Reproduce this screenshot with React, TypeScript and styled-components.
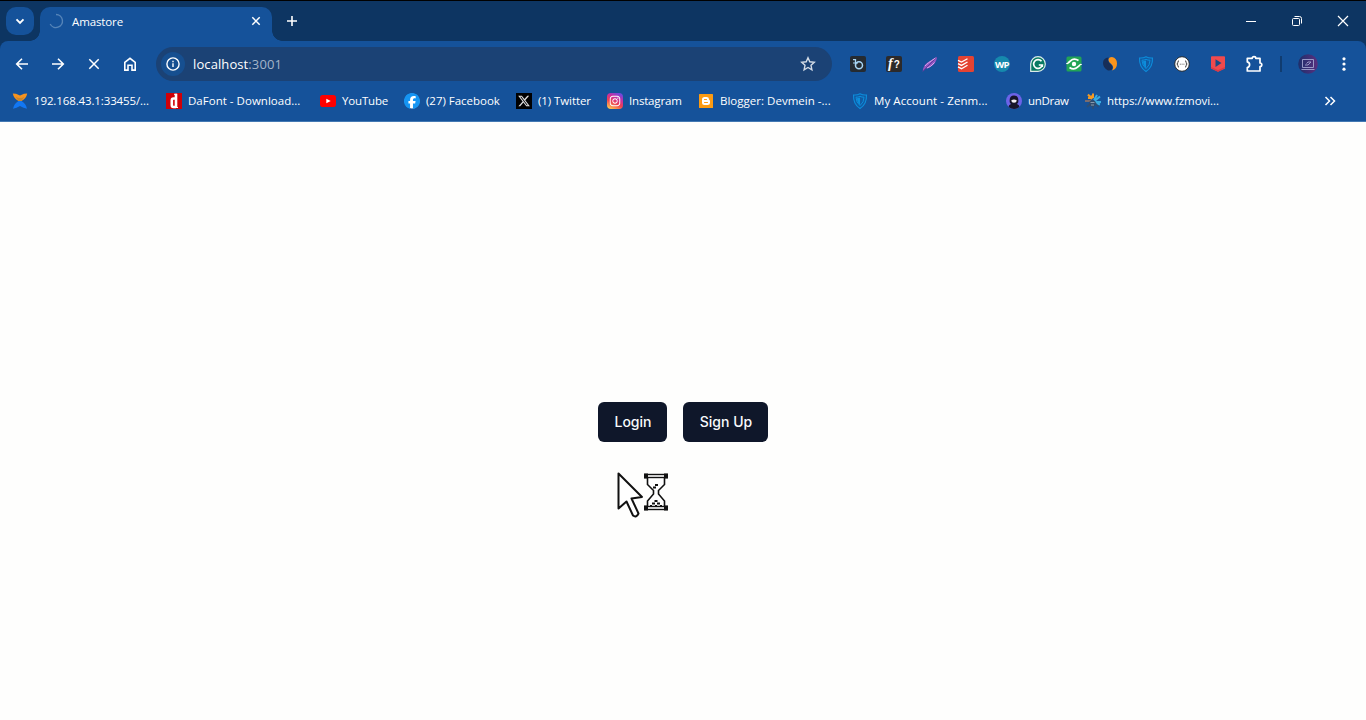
import React from 'react';
import styled, { createGlobalStyle } from 'styled-components';
import { FaFacebook, FaXTwitter, FaInstagram } from 'react-icons/fa6';

const Global = createGlobalStyle`
  * { box-sizing: border-box; }
  html, body { margin: 0; height: 100%; overflow: hidden; }
  body { background: #fefefd; }
  svg { display: block; flex: none; overflow: visible; }
`;

const ui = `'Segoe UI', 'Open Sans', 'Noto Sans', sans-serif`;

const Window = styled.div`
  position: relative;
  height: 720px;
  display: flex;
  flex-direction: column;
  font-family: ${ui};
  color: #fff;
`;
const TitleBar = styled.header`
  height: 41px;
  flex: none;
  display: flex;
  align-items: flex-start;
  background: #0d3562;
  border-top: 1px solid #000;
  padding: 6px 0 0 6px;
`;
const TabSearch = styled.button`
  width: 28px;
  height: 28px;
  margin: 0 6px 0 0;
  padding: 0;
  border: 0;
  border-radius: 10px;
  background: #15529a;
  display: grid;
  place-items: center;
`;
const Tab = styled.div`
  position: relative;
  width: 232px;
  height: 34px;
  background: #15529a;
  border-radius: 10px 10px 0 0;
  display: flex;
  align-items: center;
  padding: 0 8px 6px;
  &::before, &::after {
    content: '';
    position: absolute;
    bottom: 0;
    width: 10px;
    height: 10px;
  }
  &::before { left: -10px; background: radial-gradient(circle at 0 0, transparent 9.5px, #15529a 10px); }
  &::after { right: -10px; background: radial-gradient(circle at 100% 0, transparent 9.5px, #15529a 10px); }
`;
const TabTitle = styled.span`
  flex: 1;
  margin-left: 8px;
  font-size: 11.5px;
  line-height: 16px;
  letter-spacing: -0.12px;
  padding-top: 1px;
`;
const Cell = styled.span<{ $w?: number; $h?: number }>`
  width: ${p => p.$w ?? 36}px;
  height: ${p => p.$h ?? 34}px;
  flex: none;
  display: grid;
  place-items: center;
`;
const WindowControls = styled.div`
  display: flex;
  margin-left: auto;
  height: 28px;
`;
const ToolbarBacking = styled.div`
  flex: none;
  background: #0d3562;
`;
const ToolbarArea = styled.div`
  height: 81px;
  background: #15529a;
  border-radius: 8px 8px 0 0;
  border-bottom: 1px solid #4479b3;
  padding-top: 6px;
`;
const Toolbar = styled.nav`
  height: 34px;
  display: flex;
  align-items: center;
  padding: 0 4px;
`;
const AddressBar = styled.div`
  width: 676px;
  height: 34px;
  margin: 0 8px;
  padding: 0 6px;
  border-radius: 17px;
  background: #1b4275;
  display: flex;
  align-items: center;
`;
const SiteInfo = styled.span`
  width: 24px;
  height: 24px;
  border-radius: 50%;
  background: #164f90;
  display: grid;
  place-items: center;
  margin: 0 8px 0 -1px;
`;
const Url = styled.span`
  flex: 1;
  font-size: 13px;
  letter-spacing: 0.1px;
  line-height: 18px;
  span { color: #a4b4c9; }
`;
const Divider = styled.i`
  width: 2px;
  height: 16px;
  background: #103c70;
`;
const Bookmarks = styled.div`
  height: 40px;
  display: flex;
  align-items: center;
  padding: 0 18px 0 12px;
`;
const Bookmark = styled.div<{ $w: number }>`
  width: ${p => p.$w}px;
  display: flex;
  align-items: center;
  gap: 6px;
  flex: none;
`;
const BookmarkLabel = styled.span<{ $track: number }>`
  font-size: 11.5px;
  line-height: 16px;
  white-space: nowrap;
  letter-spacing: ${p => p.$track}px;
`;
const Overflow = styled.span`
  margin-left: auto;
  width: 36px;
  display: grid;
  place-items: center;
`;
const Page = styled.main`
  flex: 1;
  display: flex;
  align-items: center;
  justify-content: center;
  gap: 16px;
  background: #fefefd;
  padding-top: 2px;
`;
const Button = styled.button<{ $w: number }>`
  width: ${p => p.$w}px;
  height: 40px;
  padding: 0 0 0 1px;
  border: 0;
  border-radius: 6px;
  background: #0f172a;
  color: #f8fafc;
  font: 500 14px/20px Inter, sans-serif;
`;
const Pointer = styled.svg`
  position: absolute;
  left: 614px;
  top: 470px;
`;

const Line = ({ d, size = 16, w = 1.6 }: { d: string; size?: number; w?: number }) => (
  <svg width={size} height={size} viewBox="0 0 16 16" fill="none" stroke="#fff" strokeWidth={w}>
    <path d={d} />
  </svg>
);

const Shield = () => (
  <svg width="16" height="16" viewBox="0 0 16 16">
    <path d="M1.5 2Q5 2.3 8 .8Q11 2.3 14.500 2Q15 11 8 15.500Q1 11 1.500 2Z" fill="#105ba5" stroke="#0d8ddb" strokeWidth="1.1" />
    <path d="M4 4.200Q6 4.300 8 3.400Q10 4.300 12 4.200Q12 9.500 8 12.600Q4 9.500 4 4.200Z" fill="none" stroke="#0d8ddb" />
    <path d="M8 4.500V12Q5 9.500 5 5.200Z" fill="#0d8ddb" />
  </svg>
);

const Xender = () => (
  <svg width="16" height="16" viewBox="0 0 16 16">
    <path d="M.8.500 4 .700 8 2.600 12 .700 15.200.500Q14.500 5 9.500 8H6.500Q1.500 5 .8.500Z" fill="#f7931e" />
    <path d="M1 15.800Q2 10.500 6.500 8H9.500Q14 10.500 15 15.800L11.500 14.800 8 13 4.500 14.800Z" fill="#1277f3" />
    <path d="M3.500 3.500Q8 6.500 12.500 3.500L9.500 8H6.500Z" fill="#c8862f" />
  </svg>
);
const DaFont = () => (
  <svg width="16" height="16" viewBox="0 0 16 16">
    <path fill="#cf0008" d="M0 0h16v16H0z" />
    <path fill="none" stroke="#fff" strokeWidth="2.600" d="M10 .8V15M9.500 5.500H7.500Q5.800 5.500 5.800 7.500V12Q5.800 14 7.500 14H10" />
    <path stroke="#fff" d="M8 1.300H11M9 14.500h3" />
  </svg>
);
const YouTube = () => (
  <svg width="16" height="16" viewBox="0 0 16 16">
    <rect y="2" width="16" height="12" rx="2.800" fill="#f00" />
    <path fill="#fff" d="m6.300 5.700 4.400 2.300-4.400 2.300z" />
  </svg>
);
const Facebook = () => (
  <svg width="16" height="16" viewBox="0 0 16 16">
    <circle cx="8" cy="8" r="7.500" fill="#fff" />
    <FaFacebook size={16} color="#1595f3" />
  </svg>
);
const Twitter = () => (
  <svg width="16" height="16" viewBox="0 0 16 16">
    <path d="M0 0h16v16H0z" />
    <FaXTwitter x={1.500} y={1.500} size={13} color="#ddd" />
  </svg>
);
const Instagram = () => (
  <svg width="16" height="16" viewBox="0 0 16 16">
    <defs>
      <linearGradient id="ig" x1=".2" y1="1" x2=".7" y2="0">
        <stop stopColor="#ffc94f" />
        <stop offset=".4" stopColor="#ee4050" />
        <stop offset=".7" stopColor="#c82fa0" />
        <stop offset="1" stopColor="#7048dc" />
      </linearGradient>
    </defs>
    <rect width="16" height="16" rx="4" fill="url(#ig)" />
    <FaInstagram x={2} y={2} size={12} color="#fff" />
  </svg>
);
const Blogger = () => (
  <svg width="16" height="16" viewBox="0 0 16 16">
    <rect x="1" y="1" width="14" height="14" rx=".5" fill="#fc9b12" />
    <path d="M6.500 4H8.500Q11 4 11 6.300Q11 7.200 12 7.400V9.500Q12 12 9.500 12H6.500Q4 12 4 9.500V6.500Q4 4 6.500 4Z" fill="#fff" />
    <path d="M6.500 6.500H8.500M6.500 9.500H9.500" stroke="#fc9b12" strokeWidth="1.100" strokeLinecap="round" />
  </svg>
);
const UnDraw = () => (
  <svg width="16" height="16" viewBox="0 0 16 16">
    <circle cx="8" cy="8" r="8" fill="#6c63e8" />
    <path fill="#17152b" d="M3.800 9.500Q2.800 2.500 8 2.500T12.200 9.500L11 11Q13.500 12 13.500 14Q8 18 2.500 14Q2.500 12 5 11Z" />
    <path fill="#f2eff5" d="M5.200 7.500Q8 5.300 10.800 7.500Q10.500 9.800 8 9.800Q5.500 9.800 5.200 7.500Z" />
  </svg>
);
const FzMovies = () => (
  <svg width="16" height="16" viewBox="0 0 16 16">
    <g fill="none" strokeWidth="2">
      <path stroke="#f39a24" d="M7 6 3 1.500M8 5V.5M6 5H3" />
      <path stroke="#38abe2" d="m9 7 3-5M9.500 8 15 3.500M9 9h7M10 9.500l5 2" />
      <path stroke="#a7795c" d="M6 8H0" strokeWidth="1.400" />
      <path stroke="#2d4e75" d="m6 10-4 4M8 10v6M10 10l3.500 4" strokeWidth="1.800" />
    </g>
    <circle cx="6.500" cy="4" r="1.700" fill="#f39a24" />
    <circle cx="7.500" cy="10.500" r="3.300" fill="#314c6c" />
    <path d="M5.500 9.500h4M6 12h3" stroke="#aebccb" strokeWidth=".7" />
  </svg>
);

const bookmarks = [
  { icon: <Xender />, text: '192.168.43.1:33455/...', w: 154, track: -0.12 },
  { icon: <DaFont />, text: 'DaFont - Download...', w: 154, track: 0.02 },
  { icon: <YouTube />, text: 'YouTube', w: 84, track: -0.16 },
  { icon: <Facebook />, text: '(27) Facebook', w: 112, track: -0.02 },
  { icon: <Twitter />, text: '(1) Twitter', w: 91, track: -0.08 },
  { icon: <Instagram />, text: 'Instagram', w: 91, track: -0.18 },
  { icon: <Blogger />, text: 'Blogger: Devmein -...', w: 154, track: 0.02 },
  { icon: <Shield />, text: 'My Account - Zenm...', w: 154, track: 0.08 },
  { icon: <UnDraw />, text: 'unDraw', w: 79, track: -0.3 },
  { icon: <FzMovies />, text: 'https://www.fzmovi...', w: 136, track: -0.08 },
];

const extensions = [
  <svg width="16" height="16" viewBox="0 0 16 16">
    <rect width="16" height="16" rx="2" fill="#252b31" />
    <path d="M3 3.600h2.500V9.200" fill="none" stroke="#a8d6f4" strokeWidth="1.300" />
    <circle cx="9" cy="9.200" r="3.500" fill="none" stroke="#a8d6f4" strokeWidth="1.500" />
    <path d="M3 7h5" stroke="#a8d6f4" />
  </svg>,
  <svg width="16" height="16" viewBox="0 0 16 16">
    <rect width="16" height="16" rx="2" fill="#2c2a2a" />
    <text x="8" y="12" textAnchor="middle" fill="#fff" fontFamily="Liberation Serif" fontStyle="italic" fontWeight="700" fontSize="14">f<tspan dx="1" fontFamily="Liberation Sans" fontSize="10" fontStyle="normal">?</tspan></text>
  </svg>,
  <svg width="16" height="16" viewBox="0 0 16 16">
    <path d="M.8 15.300Q1 9.500 5.500 6.500L15 .7Q15 5.500 10.500 9.500Q7 12.500 3.500 12.500Z" fill="#9156c2" />
    <path d="M.8 15.500 6 10 14.500 1.500" fill="none" stroke="#62399c" strokeWidth="1" />
    <path d="M3 10Q5 7.500 13.500 2M5 12Q9 11 12.500 6.500" fill="none" stroke="#dba5ed" />
  </svg>,
  <svg width="16" height="16" viewBox="0 0 16 16">
    <rect width="16" height="16" rx="1.500" fill="#e44332" />
    <path d="m0 4.300 3.500 1.800L9.500 2.700M0 7.600l3.500 1.800L9.500 6M0 10.900l3.500 1.800L9.500 9.300" fill="none" stroke="#fff" strokeWidth="1.300" />
  </svg>,
  <svg width="16" height="16" viewBox="0 0 16 16">
    <circle cx="8" cy="8" r="8" fill="#1689ad" />
    <text x="8" y="11.500" textAnchor="middle" fill="#fff" fontFamily="Open Sans" fontWeight="700" fontSize="9.500" letterSpacing="-.6">WP</text>
  </svg>,
  <svg width="16" height="16" viewBox="0 0 16 16">
    <path d="M.7 15.300V8A7.300 7.300 0 1 1 8 15.300Z" fill="#087a62" stroke="#dbece9" strokeWidth="1.200" />
    <path d="M11.500 5.300A4.400 4.400 0 1 0 12.300 9H8.800M12.300 8.500V11" fill="none" stroke="#fff" strokeWidth="1.700" />
  </svg>,
  <svg width="16" height="16" viewBox="0 0 16 16">
    <rect x=".5" y=".5" width="15" height="15" rx="1.500" fill="#22a455" />
    <path d="M12.500 4.500Q8 1.500 4.500 4.800T1 7M3.500 11.500Q8 14.500 11.500 11.200T15 9" fill="none" stroke="#fff" strokeWidth="1.800" />
    <circle cx="8" cy="8" r="2.200" fill="#fff" />
  </svg>,
  <svg width="16" height="16" viewBox="0 0 16 16">
    <path d="M6.500 1.500Q1 2 1 7T6 14.500Q10.500 15 10.500 11.500Q10.500 9.500 8 7.500T6.500 1.500Z" fill="#172e58" />
    <path d="M6.500 4Q6.500 1 10 1Q15 2 15 7.500T10 14.500Q12.500 11 9.500 8.200Q6.500 6 6.500 4Z" fill="#fb951c" />
  </svg>,
  <Shield />,
  <svg width="16" height="16" viewBox="0 0 16 16">
    <circle cx="8" cy="8" r="7.300" fill="#fff" stroke="#242a30" strokeWidth="1" />
    <path d="M5 4.800Q3.800 4.800 3.800 6.500T2.800 8Q3.800 8 3.800 9.500T5 11.200M11 4.800Q12.200 4.800 12.200 6.500T13.200 8Q12.200 8 12.200 9.500T11 11.200" fill="none" stroke="#333" strokeWidth="1" />
    <path d="M5.800 8.200H10.500" stroke="#555" strokeDasharray="1 .8" strokeWidth=".9" />
  </svg>,
  <svg width="16" height="16" viewBox="0 0 16 16">
    <path d="M1 1Q1 .3 2 .3H14Q15 .3 15 1V12.500L8 15.800 1 12.500Z" fill="#f04a4d" />
    <path d="M1 11 8 14 15 11V12.500L8 15.800 1 12.500Z" fill="#d83b48" />
    <path d="m5.500 3.300 6 3.800-6 3.900z" fill="#164b85" />
  </svg>,
  <svg width="18" height="18" viewBox="0 0 18 18">
    <path d="M2.300 3.300H7.200Q7.200 1.700 9 1.700T10.800 3.300H15V8Q16.800 8 16.800 9.700T15 11.500V16H2.300V12.600Q4.600 11.900 4.600 9.700T2.300 6.900Z" fill="none" stroke="#fff" strokeWidth="1.700" strokeLinejoin="round" />
  </svg>,
];

export default function App() {
  return (
    <Window>
      <Global />
      <TitleBar>
        <TabSearch aria-label="Search tabs"><Line d="m4.500 6.300 3.500 3.500 3.500-3.500" w={1.9} /></TabSearch>
        <Tab>
          <svg width="16" height="16" viewBox="0 0 16 16" fill="none" stroke="#5584b8" strokeWidth="1.400"><path d="M8 1.500A6.500 6.500 0 1 1 2.200 11" /></svg>
          <TabTitle>Amastore</TabTitle>
          <Line d="m4.300 4.300 7.400 7.400m0-7.400-7.400 7.400" w={1.5} />
        </Tab>
        <Cell $w={40} $h={28}><Line d="M8 3v10M3 8h10" w={1.6} /></Cell>
        <WindowControls>
          <Cell $w={46} $h={28}><Line d="M3 8.500h10" w={1} /></Cell>
          <Cell $w={46} $h={28}>
            <svg width="16" height="16" viewBox="0 0 16 16" fill="none" stroke="#fff"><rect x="3.500" y="5.500" width="7" height="7" rx="1" /><path d="M5.500 3.500H10.500Q12.500 3.500 12.500 5.500V10.500" /></svg>
          </Cell>
          <Cell $w={46} $h={28}><Line d="m3 3 10 10m0-10L3 13" w={1.2} /></Cell>
        </WindowControls>
      </TitleBar>
      <ToolbarBacking>
        <ToolbarArea>
          <Toolbar>
            <Cell><Line d="M14 8H3M8 2.700 2.700 8 8 13.300" /></Cell>
            <Cell><Line d="M2 8h11M8 2.700 13.300 8 8 13.300" /></Cell>
            <Cell><Line d="m3.300 3.300 9.400 9.400m0-9.400-9.400 9.400" w={1.5} /></Cell>
            <Cell><Line d="M2.800 6.400 8 2.300l5.200 4.100v7.700H10V9.200H6v4.900H2.800Z" /></Cell>
            <AddressBar>
              <SiteInfo>
                <svg width="16" height="16" viewBox="0 0 16 16" fill="none" stroke="#fff" strokeWidth="1.400"><circle cx="8" cy="8" r="6.100" /><path d="M8 7.200v3.800M8 4.700v1.500" /></svg>
              </SiteInfo>
              <Url>localhost<span>:3001</span></Url>
              <Cell $w={36}>
                <svg width="16" height="16" viewBox="0 0 16 16" fill="none" stroke="#d4dce6" strokeWidth="1.400"><path d="m8 1.700 1.800 4.100 4.500.5-3.300 3 .9 4.500L8 11.500l-3.900 2.300.9-4.500-3.300-3 4.500-.5Z" /></svg>
              </Cell>
            </AddressBar>
            {extensions.map((icon, i) => <Cell key={i}>{icon}</Cell>)}
            <Cell $w={18}><Divider /></Cell>
            <Cell>
              <svg width="20" height="20" viewBox="0 0 20 20">
                <defs><linearGradient id="av"><stop stopColor="#1d2f6b" /><stop offset="1" stopColor="#59307f" /></linearGradient></defs>
                <circle cx="10" cy="10" r="9.800" fill="url(#av)" />
                <path d="M4.500 5.500h11v8h-11zM3.500 15.500h13M7 11h3l3-3H10L8.500 9.500" fill="none" stroke="#a3a5d0" strokeWidth=".9" />
              </svg>
            </Cell>
            <Cell>
              <svg width="16" height="16" viewBox="0 0 16 16" fill="#fff"><circle cx="8" cy="2.800" r="1.600" /><circle cx="8" cy="8" r="1.600" /><circle cx="8" cy="13.200" r="1.600" /></svg>
            </Cell>
          </Toolbar>
          <Bookmarks>
            {bookmarks.map(b => (
              <Bookmark key={b.text} $w={b.w}>
                {b.icon}
                <BookmarkLabel $track={b.track}>{b.text}</BookmarkLabel>
              </Bookmark>
            ))}
            <Overflow><Line d="m3.500 4 4 4-4 4M8.500 4l4 4-4 4" w={1.5} /></Overflow>
          </Bookmarks>
        </ToolbarArea>
      </ToolbarBacking>
      <Page>
        <Button $w={69}>Login</Button>
        <Button $w={85}>Sign Up</Button>
      </Page>
      <Pointer width="56" height="50" viewBox="0 0 56 50" fill="#fff" stroke="#111" strokeWidth="2">
        <path d="M4.500 3.500V38.500L12.500 31.500 19 45.500Q22.500 48 24.500 43.500L17.500 28.500 28 27Z" strokeLinejoin="round" />
        <path d="M33.500 6V14.500L39.500 20.500V24L33.500 31V38.500H50.500V31L44.500 24V20.500L50.500 14.500V6Z" strokeWidth="1.600" />
        <rect x="31" y="4.500" width="22" height="3" strokeWidth="1.400" />
        <rect x="31" y="36.500" width="22" height="3" strokeWidth="1.400" />
        <path d="M30 3.500h4v5h-4zM50 3.500h4v5h-4zM30 35.500h4v5h-4zM50 35.500h4v5h-4z" fill="#111" stroke="none" />
        <path d="M39 17.500h3M41 15h3M40.500 31h3M38 33.500h3M43 33.500h3M36 36h2M41 36h2M46 36h2" strokeWidth="2" />
      </Pointer>
    </Window>
  );
}
